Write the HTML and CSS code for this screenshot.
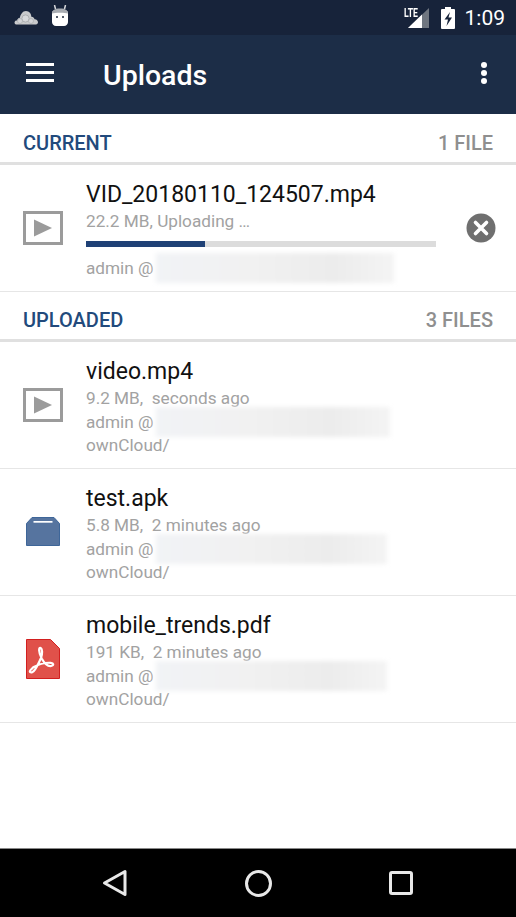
FILE: index.html
```html
<!DOCTYPE html>
<html lang="en">
<head>
<meta charset="utf-8">
<title>Uploads</title>
<link rel="stylesheet" href="styles.css">
</head>
<body>
<div class="app">
  <div class="statusbar">
    <div class="status-left">
      <svg class="ic-cloud" width="24" height="15" viewBox="0 0 24 15"><path fill="#c9cacc" d="M2 14.500c-1.600-.3-2-2.400-.8-3.400.6-.5 1.300-.6 2-.5.100-1.500 1.200-2.800 2.700-2.900C6.500 4.500 8.500 1 12 1c3.200 0 5.300 2.800 5.300 5.700 1.500-.2 2.900.8 3.200 2.500 2-.2 3.500 1.400 3.500 3 0 1.200-.8 2.100-2 2.300z"/><circle cx="11.500" cy="8.500" r="3.600" fill="#d8d9db" stroke="#a5a7aa" stroke-width=".8"/><circle cx="6" cy="11" r="2.500" fill="#d4d5d8" stroke="#a5a7aa" stroke-width=".6"/><circle cx="17" cy="11" r="2.500" fill="#d4d5d8" stroke="#a5a7aa" stroke-width=".6"/></svg>
      <svg class="ic-droid" width="18" height="21" viewBox="0 0 18 21"><path fill="#fff" d="M1 8c0-1.500 1-2.500 2.500-2.500h11C16 5.500 17 6.500 17 8v9c0 2.300-1.700 4-4 4H5c-2.300 0-4-1.700-4-4z"/><path fill="#a9adb3" d="M1 8.500C1 5.500 3.500 3.500 9 3.500s8 2 8 5c-2.500-1-13.500-1-16 0z"/><path stroke="#d8d9dc" stroke-width="1.500" fill="none" d="M4.500 4 3.500 0M13.500 4l1-4"/><circle cx="6" cy="12" r="1" fill="#1a2538"/><circle cx="12" cy="12" r="1" fill="#1a2538"/></svg>
    </div>
    <div class="status-right">
      <div class="signal">
        <span class="lte">LTE</span>
        <svg width="21" height="20" viewBox="0 0 21 20"><path fill="#6f7680" d="M21 0v20H0z"/><path fill="#fff" d="M14 6.500V20H0z"/></svg>
      </div>
      <svg class="ic-batt" width="14" height="22" viewBox="0 0 14 22"><path fill="#fff" d="M4 0h6v2h3a1 1 0 0 1 1 1v18a1 1 0 0 1-1 1H1a1 1 0 0 1-1-1V3a1 1 0 0 1 1-1h3z"/><path fill="#17233a" d="M9 5 3.500 12.500H7L5.500 19 11 10.500H7.500z"/></svg>
      <span class="clock">1:09</span>
    </div>
  </div>

  <header class="toolbar">
    <div class="hamburger"><i></i><i></i><i></i></div>
    <h1 class="title">Uploads</h1>
    <div class="overflow"><i></i><i></i><i></i></div>
  </header>

  <main class="content">
    <div class="section-head"><span class="section-name">CURRENT</span><span class="section-count">1 FILE</span></div>
    <div class="row row-current">
      <div class="thumb"><svg width="40" height="34" viewBox="0 0 40 34"><rect x="1.500" y="1.500" width="37" height="31" fill="none" stroke="#9b9b9b" stroke-width="3"/><path fill="#9b9b9b" d="M11 8.500 29 17 11 25.500z"/></svg></div>
      <div class="info">
        <div class="name">VID_20180110_124507.mp4</div>
        <div class="meta">22.2 MB, Uploading …</div>
        <div class="progress"><div class="progress-fill"></div></div>
        <div class="meta line-account">admin @<span class="blur blur-a"></span></div>
      </div>
      <svg class="cancel" width="30" height="30" viewBox="0 0 30 30"><circle cx="15" cy="15" r="14.500" fill="#6f6f6f"/><path stroke="#fff" stroke-width="3.600" stroke-linecap="round" d="m9.500 9.500 11 11m0-11-11 11"/></svg>
    </div>

    <div class="section-head section-second"><span class="section-name">UPLOADED</span><span class="section-count">3 FILES</span></div>
    <div class="row">
      <div class="thumb"><svg width="40" height="34" viewBox="0 0 40 34"><rect x="1.500" y="1.500" width="37" height="31" fill="none" stroke="#9b9b9b" stroke-width="3"/><path fill="#9b9b9b" d="M11 8.500 29 17 11 25.500z"/></svg></div>
      <div class="info">
        <div class="name">video.mp4</div>
        <div class="meta">9.2 MB,&nbsp;&nbsp;seconds ago</div>
        <div class="meta">admin @<span class="blur blur-b"></span></div>
        <div class="meta">ownCloud/</div>
      </div>
    </div>
    <div class="row">
      <div class="thumb thumb-doc"><svg width="34" height="30" viewBox="0 0 34 30"><path fill="#56749f" stroke="#3e6699" d="M.5 6.500 6 .5h22l5.500 6v22H.5z"/><path fill="#fff" d="M7.500 4h19v1.700h-19z"/></svg></div>
      <div class="info">
        <div class="name">test.apk</div>
        <div class="meta">5.8 MB,&nbsp;&nbsp;2 minutes ago</div>
        <div class="meta">admin @<span class="blur blur-c"></span></div>
        <div class="meta">ownCloud/</div>
      </div>
    </div>
    <div class="row">
      <div class="thumb thumb-doc"><svg width="34" height="40" viewBox="0 0 34 40"><path fill="#e0514a" stroke="#d21f1f" d="M.5.500h24l9 9v30H.5z"/><path fill="none" stroke="#fff" stroke-width="2.200" d="M4 33c3 2.500 7-5 11-14 1.500-4 1.500-9-.3-10-2-1-2.500 3.500 1 10.500 3 5.500 6.500 8 9.500 7.500 3-.5 2.500-3-.5-3.200-5-.3-13 2-17.500 4.500C6 30 3 31.500 4 33z"/></svg></div>
      <div class="info">
        <div class="name">mobile_trends.pdf</div>
        <div class="meta">191 KB,&nbsp;&nbsp;2 minutes ago</div>
        <div class="meta">admin @<span class="blur blur-c"></span></div>
        <div class="meta">ownCloud/</div>
      </div>
    </div>
  </main>

  <nav class="navbar">
    <svg width="26" height="28" viewBox="0 0 26 28"><path fill="none" stroke="#e8e8e8" stroke-width="3" stroke-linejoin="round" d="M23 2.500v23L2.500 14z"/></svg>
    <svg class="nav-home" width="27" height="27" viewBox="0 0 27 27"><circle cx="13.500" cy="13.500" r="12" fill="none" stroke="#e8e8e8" stroke-width="3"/></svg>
    <svg width="24" height="24" viewBox="0 0 24 24"><rect x="1.500" y="1.500" width="21" height="21" rx="1.500" fill="none" stroke="#e8e8e8" stroke-width="3"/></svg>
  </nav>
</div>
</body>
</html>
```
FILE: styles.css
```css
* { box-sizing: border-box; }
html, body { margin: 0; padding: 0; }
body { font-family: Roboto, "Noto Sans", sans-serif; background: #fff; }
.app { width: 516px; height: 917px; display: flex; flex-direction: column; overflow: hidden; }

.statusbar { height: 35px; background: #17233a; display: flex; justify-content: space-between; align-items: center; padding: 0 11px 0 14px; }
.status-left { display: flex; align-items: center; gap: 13px; }
.ic-cloud { margin-top: -1px; }
.ic-droid { margin-top: -4px; }
.status-right { display: flex; align-items: center; }
.signal { position: relative; width: 25px; height: 20px; display: flex; justify-content: flex-end; margin-right: 12px; }
.lte { position: absolute; left: 0; top: -2px; color: #fff; font-size: 12px; line-height: 14px; font-weight: 700; transform: scaleX(.72); transform-origin: left top; }
.ic-batt { margin-right: 10px; }
.clock { color: #fff; font-size: 21px; line-height: 24px; }

.toolbar { height: 79px; background: #1c2d47; display: flex; align-items: center; padding: 0 29px 0 26px; color: #fff; }
.hamburger { width: 28px; display: flex; flex-direction: column; gap: 5px; margin-top: -4px; }
.hamburger i { display: block; height: 3px; background: #fff; }
.title { flex: 1; margin: 2px 0 0 49px; font-size: 28.500px; font-weight: 500; line-height: 34px; }
.overflow { display: flex; flex-direction: column; gap: 2px; margin-top: -4px; }
.overflow i { display: block; width: 6px; height: 6px; border-radius: 50%; background: #fff; }

.content { flex: 1; background: #fff; }
.section-head { height: 51px; border-bottom: 3px solid #e0e0e0; display: flex; justify-content: space-between; align-items: center; padding: 9px 23px 0; font-size: 20px; font-weight: 500; }
.section-second { height: 50px; padding-top: 9px; }
.section-name { color: #224a7c; }
.section-count { color: #8f8f8f; }

.row { height: 127px; border-bottom: 1px solid #e6e6e6; display: flex; align-items: flex-start; position: relative; }
.thumb { width: 86px; padding-left: 23px; height: 100%; display: flex; align-items: center; flex: none; }
.thumb-doc { padding-left: 26px; }
.info { flex: 1; padding-top: 16px; }
.name { font-size: 23px; line-height: 28px; color: #111; margin-bottom: 1px; }
.meta { font-size: 17.200px; line-height: 23.500px; color: #a2a2a2; white-space: nowrap; }
.line-account { margin-top: 10px; }
.progress { width: 350px; height: 6px; background: #dcdcdc; margin-top: 7px; }
.progress-fill { width: 119px; height: 100%; background: #1f4176; }
.cancel { position: absolute; right: 20px; top: 48px; }
.blur { display: inline-block; height: 30px; margin: -4px 0 -4px 3px; vertical-align: top; filter: blur(2px); background: linear-gradient(90deg, #f1f3f6 0%, #f1f1f1 40%, #ececec 75%, #f4f4f4 100%); }
.blur-a { width: 238px; }
.blur-b { width: 234px; }
.blur-c { width: 231px; }

.navbar { height: 69px; background: #000; border-top: 1px solid #888; display: flex; justify-content: space-between; align-items: center; padding: 0 103px 0 102px; }
```
